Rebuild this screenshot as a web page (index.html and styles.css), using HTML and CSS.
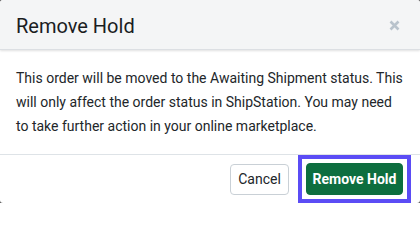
FILE: index.html
```html
<!DOCTYPE html>
<html>
<head>
<meta charset="utf-8">
<link rel="stylesheet" href="styles.css">
</head>
<body>
<div class="modal">
  <div class="modal-header">
    <h2 class="modal-title">Remove Hold</h2>
    <button class="close" aria-label="Close">
      <svg width="11" height="11" viewBox="0 0 11 11"><path d="M1.5 1.5 L9.5 9.5 M9.5 1.5 L1.5 9.5" stroke="#b9c3cc" stroke-width="2.6" stroke-linecap="butt"/></svg>
    </button>
  </div>
  <div class="modal-body">
    This order will be moved to the Awaiting Shipment status. This will only affect the order status in ShipStation. You may need to take further action in your online marketplace.
  </div>
  <div class="modal-footer">
    <button class="btn btn-cancel">Cancel</button>
    <div class="focus-ring">
      <button class="btn btn-primary">Remove Hold</button>
    </div>
  </div>
</div>
</body>
</html>
```
FILE: styles.css
```css
html {
  margin: 0;
  padding: 0;
  background: #ffffff;
}
body {
  margin: 0;
  padding: 0;
  width: 420px;
  height: 203px;
  overflow: hidden;
  background: #5a5a5a;
}
.modal {
  width: 420px;
  height: 203px;
  background: #ffffff;
  border-radius: 3px;
  overflow: hidden;
  font-family: Roboto, "Liberation Sans", sans-serif;
  color: #212529;
  display: flex;
  flex-direction: column;
}
.modal-header {
  flex: 0 0 49px;
  background: #f4f5f6;
  border-bottom: 1px solid #dcdfe3;
  box-shadow: 0 1px 2px rgba(0,0,0,0.12);
  display: flex;
  align-items: center;
  justify-content: space-between;
  padding: 0 16px 0 16px;
  position: relative;
  z-index: 1;
}
.modal-title {
  margin: 0;
  font-size: 20px;
  font-weight: 400;
  color: #1b1d1f;
  padding-top: 2px;
}
.close {
  border: 0;
  background: none;
  padding: 0;
  margin: 2px 4px 0 0;
  width: 11px;
  height: 11px;
  display: flex;
}
.modal-body {
  flex: 0 0 auto;
  padding: 16px 16px 16px 16px;
  font-size: 14px;
  line-height: 24px;
  color: #22262a;
  border-bottom: 1px solid #dee3e7;
}
.modal-footer {
  flex: 1;
  display: flex;
  justify-content: flex-end;
  align-items: center;
  gap: 9px;
  padding: 0 9px 0 16px;
}
.focus-ring {
  border: 4px solid #5b4cf5;
  padding: 4px;
  display: flex;
}
.btn {
  font-family: Roboto, "Liberation Sans", sans-serif;
  font-size: 14px;
  border-radius: 4px;
  cursor: pointer;
  padding: 0;
}
.btn-cancel {
  background: #ffffff;
  border: 1px solid #c9d0d6;
  color: #212529;
  width: 59px;
  height: 31px;
}
.btn-primary {
  background: #0d6e3f;
  border: 1px solid #0d6e3f;
  color: #ffffff;
  font-weight: 700;
  width: 97px;
  height: 32px;
}
```
